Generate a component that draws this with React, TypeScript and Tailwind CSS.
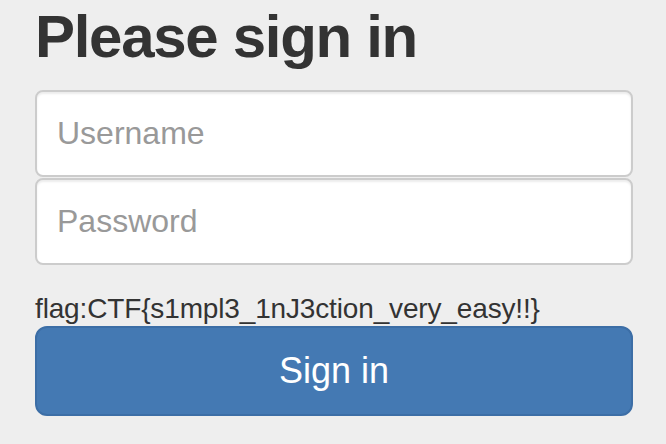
import React from "react";

const App: React.FC = () => {
  return (
    <div className="w-[666px] h-[444px] overflow-hidden bg-[#eeeeee] pl-[35px] pr-[33px] font-['Liberation_Sans',Arial,sans-serif] text-[#333333]">
      <h2 className="pt-[4px] mb-[20px] text-[60px] leading-[66px] font-bold tracking-[-1.3px]">
        Please sign in
      </h2>

      <div className="flex flex-col gap-[1px]">
        <input
          type="text"
          placeholder="Username"
          className="h-[87px] w-full rounded-[8px] border-2 border-[#cccccc] bg-white px-[20px] text-[32px] text-[#555555] placeholder:text-[#999999] shadow-[inset_0_2px_2px_rgba(0,0,0,0.075)] outline-none"
        />
        <input
          type="password"
          placeholder="Password"
          className="h-[87px] w-full rounded-[8px] border-2 border-[#cccccc] bg-white px-[20px] text-[32px] text-[#555555] placeholder:text-[#999999] shadow-[inset_0_2px_2px_rgba(0,0,0,0.075)] outline-none"
        />
      </div>

      <p className="mt-[27px] text-[28px] leading-[34px] tracking-[-0.15px]">flag:CTF{"{"}s1mpl3_1nJ3ction_very_easy!!{"}"}</p>

      <button
        type="submit"
        className="block h-[90px] w-full rounded-[12px] border-2 border-[#3c6ea6] bg-[#4479b3] text-[36px] text-white"
      >
        Sign in
      </button>
    </div>
  );
};

export default App;
